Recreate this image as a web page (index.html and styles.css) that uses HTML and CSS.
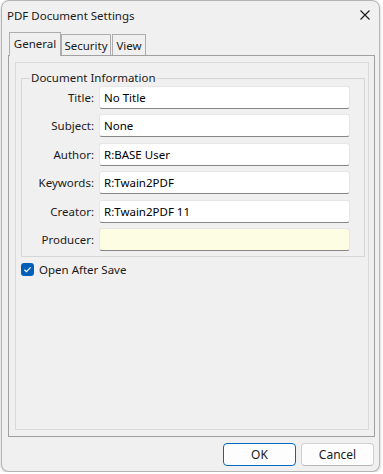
FILE: index.html
```html
<!DOCTYPE html>
<html>
<head>
    <title>PDF Document Settings</title>
    <link rel="stylesheet" href="styles.css">
</head>
<body>
    <div class="window">
        <div class="titlebar">
            <span class="title">PDF Document Settings</span>
            <svg class="close" width="10" height="10" viewBox="0 0 10 10">
                <path d="M0.5 0.5 L9.5 9.5 M9.5 0.5 L0.5 9.5" stroke="#1a1a1a" stroke-width="1.1" fill="none"/>
            </svg>
        </div>

        <div class="content">
            <div class="tabs">
                <div class="tab tab-active">General</div>
                <div class="tab tab-security">Security</div>
                <div class="tab tab-view">View</div>
            </div>

            <div class="panel">
                <div class="page">
                    <fieldset class="group">
                        <legend>Document Information</legend>
                        <div class="field">
                            <label>Title:</label>
                            <div class="input">No Title</div>
                        </div>
                        <div class="field">
                            <label>Subject:</label>
                            <div class="input">None</div>
                        </div>
                        <div class="field">
                            <label>Author:</label>
                            <div class="input">R:BASE User</div>
                        </div>
                        <div class="field">
                            <label>Keywords:</label>
                            <div class="input">R:Twain2PDF</div>
                        </div>
                        <div class="field">
                            <label>Creator:</label>
                            <div class="input">R:Twain2PDF 11</div>
                        </div>
                        <div class="field">
                            <label>Producer:</label>
                            <div class="input input-readonly"></div>
                        </div>
                    </fieldset>

                    <div class="check-row">
                        <span class="checkbox">
                            <svg width="13" height="13" viewBox="0 0 13 13">
                                <path d="M3.4 6.7 L5.5 8.7 L9.6 4.4" stroke="#fff" stroke-width="1.2" fill="none"/>
                            </svg>
                        </span>
                        <span>Open After Save</span>
                    </div>
                </div>
            </div>

            <div class="buttons">
                <button class="btn btn-default">OK</button>
                <button class="btn">Cancel</button>
            </div>
        </div>
    </div>
</body>
</html>
```

FILE: styles.css
```css
* { box-sizing: border-box; }

body {
    margin: 0;
    background: #ffffff;
    font-family: "Noto Sans", "Open Sans", sans-serif;
    font-size: 11.5px;
    color: #1a1a1a;
}

.window {
    margin-left: 1px;
    width: 379px;
    height: 472px;
    background: #f0f0f0;
    border: 1px solid #b4b4b4;
    border-radius: 8px;
    box-shadow: 0 1px 3px rgba(0,0,0,0.25);
    display: flex;
    flex-direction: column;
}

.titlebar {
    height: 31px;
    padding: 0 8px 0 5px;
    display: flex;
    align-items: center;
    justify-content: space-between;
    font-size: 11.5px;
}
.titlebar .title { margin-top: -2px; }
.close { margin-right: 1px; margin-top: -3px; }

.content {
    padding: 0 4px 5px 6px;
}

.tabs {
    height: 23px;
    display: flex;
    align-items: flex-end;
    padding-left: 1px;
}
.tab {
    height: 21px;
    border: 1px solid #adadad;
    border-bottom: none;
    background: #f0f0f0;
    display: flex;
    align-items: center;
    justify-content: center;
}
.tab-active {
    position: relative;
    z-index: 1;
    height: 24px;
    width: 52px;
    margin-bottom: -1px;
    padding-bottom: 2px;
}
.tab-security { width: 50px; }
.tab-view { width: 34px; margin-left: 1px; }

.panel {
    height: 382px;
    border: 1px solid #a0a0a0;
    padding: 6px 5px 6px 6px;
}

.page {
    height: 100%;
    border: 1px solid #dadada;
    padding: 7px 3px 0 5px;
}

.group {
    margin: 0;
    border: 1px solid #d6d6d6;
    padding: 0 12px 5px 8px;
    min-width: 0;
}
.group legend {
    padding: 0 1px;
    line-height: 16px;
}

.field {
    display: grid;
    grid-template-columns: 64px 251px;
    column-gap: 5px;
    align-items: center;
}
.field + .field { margin-top: 5.4px; }
.field label {
    text-align: right;
    color: #1a1a1a;
}

.input {
    height: 23px;
    background: #ffffff;
    border: 1px solid #e6e6e6;
    border-bottom-color: #868686;
    border-radius: 3px;
    padding: 2px 4px 0;
    line-height: 18px;
    color: #000;
}
.input-readonly { background: #fdfde3; }

.check-row {
    margin-top: 5px;
    display: flex;
    align-items: center;
    gap: 5px;
}
.checkbox {
    width: 13px;
    height: 13px;
    border-radius: 3px;
    background: #005fb8;
    display: flex;
}

.buttons {
    margin-top: 6px;
    display: flex;
    justify-content: flex-end;
    gap: 5px;
    padding-right: 1px;
}
.btn {
    width: 73px;
    height: 23px;
    font-family: inherit;
    font-size: 12px;
    color: #1a1a1a;
    background: #fdfdfd;
    border: 1px solid #d0d0d0;
    border-bottom-color: #b8b8b8;
    border-radius: 4px;
    padding: 0;
}
.btn-default {
    border: 1px solid #0067c0;
    box-shadow: inset 0 0 0 1px #ffffff;
}
```
